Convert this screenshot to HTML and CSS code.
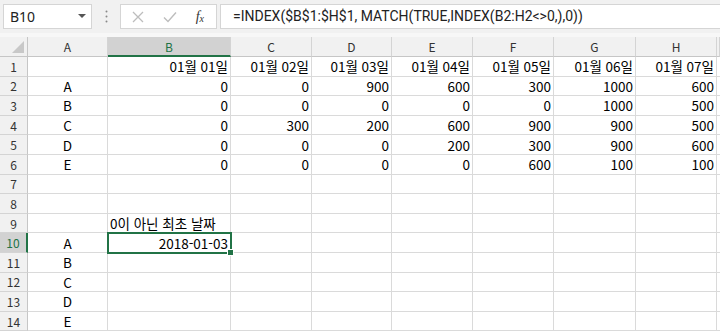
FILE: index.html
```html
<!DOCTYPE html>
<html lang="ko">
<head>
  <meta charset="UTF-8">
  <title>Sheet</title>
  <link rel="stylesheet" href="styles.css">
</head>
<body>

<div class="toolbar">
  <div class="namebox">
    <span>B10</span>
    <svg class="caret" width="8" height="5" viewBox="0 0 8 5"><path d="M0 0h8L4 4z" fill="#555"/></svg>
  </div>
  <div class="grip">
    <svg width="3" height="13" viewBox="0 0 3 13"><circle cx="1.5" cy="1.5" r="1" fill="#888"/><circle cx="1.5" cy="6.5" r="1" fill="#888"/><circle cx="1.5" cy="11.5" r="1" fill="#888"/></svg>
  </div>
  <div class="fxbox">
    <svg width="12" height="12" viewBox="0 0 12 12"><path d="M1 1l10 10M11 1L1 11" stroke="#bdbdbd" stroke-width="1.3"/></svg>
    <svg width="14" height="12" viewBox="0 0 14 12"><path d="M1 6.5l4 4L13 1.5" stroke="#bdbdbd" stroke-width="1.4" fill="none"/></svg>
    <span class="fx">f<sub>x</sub></span>
  </div>
  <div class="formula">=INDEX($B$1:$H$1, MATCH(TRUE,INDEX(B2:H2&lt;&gt;0,),0))</div>
</div>

<div class="sheet" id="sheet"></div>

<script>
  const cols = ["A", "B", "C", "D", "E", "F", "G", "H", ""];
  const data = {
    1: ["", "01월 01일", "01월 02일", "01월 03일", "01월 04일", "01월 05일", "01월 06일", "01월 07일"],
    2: ["A", 0, 0, 900, 600, 300, 1000, 600],
    3: ["B", 0, 0, 0, 0, 0, 1000, 500],
    4: ["C", 0, 300, 200, 600, 900, 900, 500],
    5: ["D", 0, 0, 0, 200, 300, 900, 600],
    6: ["E", 0, 0, 0, 0, 600, 100, 100],
    9: ["", "0이 아닌 최초 날짜"],
    10: ["A", "2018-01-03"],
    11: ["B"],
    12: ["C"],
    13: ["D"],
    14: ["E"]
  };

  function renderSheet() {
    const sheet = document.getElementById("sheet");
    let html = '<div class="corner"></div>';
    cols.forEach(c => {
      html += `<div class="colhead${c === "B" ? " active" : ""}">${c}</div>`;
    });
    for (let r = 1; r <= 14; r++) {
      const row = data[r] || [];
      html += `<div class="rowhead${r === 10 ? " active" : ""}">${r}</div>`;
      cols.forEach((c, i) => {
        const v = row[i] === undefined ? "" : row[i];
        let cls = "cell";
        if (i === 0) cls += " center";
        else if (r === 9 && i === 1) cls += " left";
        else cls += " right";
        if (r === 10 && i === 1) cls += " selected";
        html += `<div class="${cls}">${v}</div>`;
      });
    }
    sheet.innerHTML = html;
  }

  renderSheet();
</script>

</body>
</html>
```

FILE: styles.css
```css
body {
  margin: 0;
  width: 720px;
  height: 333px;
  overflow: hidden;
  background: #fff;
  font-family: "Noto Sans CJK KR", "Noto Sans", sans-serif;
  color: #000;
}
.toolbar {
  height: 33px;
  background: #f1f1f1;
  display: flex;
  align-items: center;
  padding: 0 0 0 3px;
  border-bottom: 4px solid #f7f7f7;
}
.namebox {
  width: 89px;
  height: 25px;
  box-sizing: border-box;
  background: #fff;
  border: 1px solid #d5d5d5;
  display: flex;
  align-items: center;
  justify-content: space-between;
  padding: 0 5px 0 6px;
  font-family: "Noto Sans", sans-serif;
  font-size: 14px;
  color: #222;
}
.grip {
  width: 28px;
  display: flex;
  justify-content: center;
}
.fxbox {
  width: 97px;
  height: 25px;
  box-sizing: border-box;
  background: #fff;
  border: 1px solid #d5d5d5;
  display: flex;
  align-items: center;
  justify-content: space-between;
  padding: 0 12px 0 11px;
}
.fx {
  font-family: "Liberation Serif", serif;
  font-style: italic;
  font-size: 14px;
  color: #333;
}
.fx sub {
  font-size: 10px;
  vertical-align: -1px;
}
.formula {
  flex: 1;
  height: 25px;
  margin-left: 3px;
  box-sizing: border-box;
  background: #fff;
  border: 1px solid #d5d5d5;
  border-right: none;
  padding-left: 12px;
  font-family: Roboto, sans-serif;
  font-size: 14px;
  line-height: 23px;
  color: #222;
  white-space: nowrap;
}
.sheet {
  display: grid;
  grid-template-columns: 28px 80px 123px 81px 80px 81px 81px 82px 81px 3px;
  grid-template-rows: 20px repeat(14, 19.6px);
}
.corner,
.colhead,
.rowhead {
  background: #f1f1f1;
  box-sizing: border-box;
  font-size: 12px;
  color: #333;
  display: flex;
  align-items: center;
  justify-content: center;
}
.corner {
  border-right: 1px solid #c6c6c6;
  border-bottom: 1px solid #c6c6c6;
  position: relative;
}
.corner::after {
  content: "";
  position: absolute;
  right: 3px;
  bottom: 3px;
  border-style: solid;
  border-width: 0 0 12px 12px;
  border-color: transparent transparent #c8c8c8 transparent;
}
.colhead {
  border-right: 1px solid #d4d4d4;
  border-bottom: 1px solid #c6c6c6;
}
.colhead.active {
  background: #d2d2d2;
  color: #217346;
  border-bottom: 2px solid #217346;
}
.rowhead {
  border-right: 1px solid #c6c6c6;
  border-bottom: 1px solid #d4d4d4;
}
.rowhead.active {
  background: #d2d2d2;
  color: #217346;
  border-right: 2px solid #217346;
}
.cell {
  box-sizing: border-box;
  border-right: 1px solid #dadada;
  border-bottom: 1px solid #dadada;
  font-size: 13.5px;
  line-height: 18px;
  padding: 0 2px;
  display: flex;
  align-items: center;
  white-space: nowrap;
  position: relative;
}
.cell.center {
  justify-content: center;
}
.cell.right {
  justify-content: flex-end;
}
.cell.left {
  justify-content: flex-start;
  overflow: visible;
}
.cell.selected {
  outline: 2px solid #217346;
  outline-offset: -1px;
  z-index: 1;
}
.cell.selected::after {
  content: "";
  position: absolute;
  right: -4px;
  bottom: -4px;
  width: 5px;
  height: 5px;
  background: #217346;
  border: 1px solid #fff;
}
```
